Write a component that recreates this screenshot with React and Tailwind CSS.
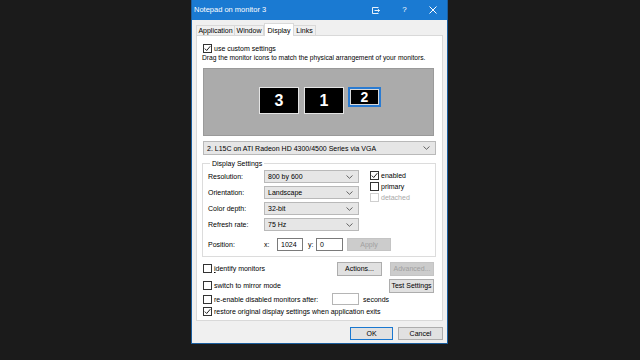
import React from 'react';

const font = { fontFamily: '"Liberation Sans", Arial, sans-serif' };

function Check({ checked, disabled }) {
  return (
    <div
      className={`w-[9px] h-[9px] border bg-white flex items-center justify-center shrink-0 ${
        disabled ? 'border-[#cfcfcf]' : 'border-[#333333]'
      }`}
    >
      {checked && (
        <svg width="7" height="7" viewBox="0 0 7 7">
          <path d="M0.8 3.6 L2.7 5.5 L6.3 1.2" fill="none" stroke="#222" strokeWidth="1" />
        </svg>
      )}
    </div>
  );
}

function CheckRow({ label, checked, disabled, className = '' }) {
  return (
    <div className={`flex items-center gap-[2px] whitespace-nowrap ${className}`}>
      <Check checked={checked} disabled={disabled} />
      <span className={disabled ? 'text-[#a8a8a8]' : 'text-black'}>{label}</span>
    </div>
  );
}

function Chevron() {
  return (
    <svg width="7" height="4" viewBox="0 0 7 4" className="shrink-0">
      <path d="M0.5 0.5 L3.5 3.3 L6.5 0.5" fill="none" stroke="#555" strokeWidth="0.9" />
    </svg>
  );
}

function Select({ value, className = '' }) {
  return (
    <div
      className={`h-[13px] bg-[#e6e6e6] border border-[#b9b9b9] flex items-center justify-between pl-[3px] pr-[5px] whitespace-nowrap ${className}`}
    >
      <span>{value}</span>
      <Chevron />
    </div>
  );
}

function Button({ label, disabled, primary, className = '' }) {
  return (
    <div
      className={`flex items-center justify-center border whitespace-nowrap ${
        disabled
          ? 'bg-[#cccccc] border-[#c4c4c4] text-[#a0a0a0]'
          : primary
          ? 'bg-[#e1e1e1] border-[#1a78d0] text-black'
          : 'bg-[#e1e1e1] border-[#adadad] text-black'
      } ${className}`}
    >
      {label}
    </div>
  );
}

function Monitor({ n, selected }) {
  if (selected) {
    return (
      <div className="w-[33px] h-[20px] border-2 border-[#2a7bd2] bg-black flex items-center justify-center">
        <div className="w-full h-full border border-[#d8d8d8] flex items-center justify-center text-white font-bold text-[14px]">
          {n}
        </div>
      </div>
    );
  }
  return (
    <div className="w-[40px] h-[27px] border border-[#e4e4e4] bg-black flex items-center justify-center text-white font-bold text-[16px]">
      {n}
    </div>
  );
}

export default function App() {
  const tabs = [
    { name: 'Application', w: 'w-[39px]' },
    { name: 'Window', w: 'w-[30px]' },
    { name: 'Display', w: 'w-[30px]', active: true },
    { name: 'Links', w: 'w-[23px]' },
  ];

  const rows = [
    ['Resolution:', '800 by 600'],
    ['Orientation:', 'Landscape'],
    ['Color depth:', '32-bit'],
    ['Refresh rate:', '75 Hz'],
  ];

  return (
    <div className="w-[640px] h-[360px] bg-[#1b1b1b] overflow-hidden" style={font}>
      <div className="ml-[191px] w-[257px] h-[344px] flex flex-col border-x border-b border-[#1b5e9e] text-[7px] leading-none">
        {/* title bar */}
        <div className="h-[20px] bg-[#1a7ad2] flex items-center text-white shrink-0">
          <span className="pl-[2px] text-[7.5px]">Notepad on monitor 3</span>
          <div className="ml-auto flex h-full">
            <div className="w-[29px] flex items-center justify-center">
              <svg width="8" height="7" viewBox="0 0 8 7">
                <path d="M6.5 0.5 H0.5 V6.5 H6.5" fill="none" stroke="#fff" strokeWidth="0.9" />
                <path d="M2.5 3.5 H7.5 M5.8 2 L7.5 3.5 L5.8 5" fill="none" stroke="#fff" strokeWidth="0.9" />
              </svg>
            </div>
            <div className="w-[29px] flex items-center justify-center text-[8px]">?</div>
            <div className="w-[28px] flex items-center justify-center">
              <svg width="8" height="8" viewBox="0 0 8 8">
                <path d="M0.5 0.5 L7.5 7.5 M7.5 0.5 L0.5 7.5" stroke="#fff" strokeWidth="1" />
              </svg>
            </div>
          </div>
        </div>

        {/* body */}
        <div className="flex-1 bg-[#f0f0f0] pl-[4px] pr-[4px] flex flex-col">
          {/* tabs */}
          <div className="h-[15px] flex items-end">
            {tabs.map((t) =>
              t.active ? (
                <div
                  key={t.name}
                  className={`${t.w} h-[13px] -mb-[1px] bg-white border border-b-0 border-[#d9d9d9] flex items-center justify-center relative z-10`}
                >
                  {t.name}
                </div>
              ) : (
                <div
                  key={t.name}
                  className={`${t.w} h-[10px] bg-[#f0f0f0] border border-b-0 border-[#d9d9d9] -ml-[1px] first:ml-0 flex items-center justify-center`}
                >
                  {t.name}
                </div>
              )
            )}
          </div>

          {/* panel */}
          <div className="h-[286px] bg-white border border-[#d9d9d9] flex flex-col pl-[6px] pr-[8px] pt-[7px]">
            <CheckRow label="use custom settings" checked className="h-[10px]" />
            <div className="h-[11px] flex items-center -ml-[1px] whitespace-nowrap text-[6.7px]">
              Drag the monitor icons to match the physical arrangement of your monitors.
            </div>

            <div className="mt-[4px] h-[68px] w-[231px] bg-[#ababab] border border-[#9a9a9a] flex items-start pt-[18px] pl-[55px]">
              <Monitor n="3" />
              <div className="w-[5px]" />
              <Monitor n="1" />
              <div className="w-[4px]" />
              <Monitor n="2" selected />
            </div>

            <Select
              value="2. L15C on ATI Radeon HD 4300/4500 Series via VGA"
              className="mt-[5px] h-[14px] w-[233px]"
            />

            <fieldset className="mt-[4px] w-[234px] -ml-[1px] h-[98px] border border-[#dcdcdc] pl-[5px] pr-[4px]">
              <legend className="px-[2px] ml-[2px] h-[9px] leading-[9px]">Display Settings</legend>
              <div className="flex mt-[2px]">
                <div className="flex flex-col gap-[3px]">
                  {rows.map(([label, value]) => (
                    <div key={label} className="flex items-center h-[13px]">
                      <span className="w-[56px]">{label}</span>
                      <Select value={value} className="w-[95px]" />
                    </div>
                  ))}
                </div>
                <div className="ml-[11px] flex flex-col">
                  <CheckRow label="enabled" checked className="h-[11px]" />
                  <CheckRow label="primary" className="h-[11px]" />
                  <CheckRow label="detached" disabled className="h-[11px]" />
                </div>
              </div>
              <div className="flex items-center h-[13px] mt-[7px]">
                <span className="w-[56px]">Position:</span>
                <span className="w-[13px]">x:</span>
                <div className="w-[26px] h-[13px] border border-[#7a7a7a] bg-white flex items-center pl-[3px]">1024</div>
                <span className="ml-[5px] w-[8px]">y:</span>
                <div className="w-[27px] h-[13px] border border-[#7a7a7a] bg-white flex items-center pl-[3px]">0</div>
                <Button label="Apply" disabled className="ml-[4px] w-[44px] h-[13px]" />
              </div>
            </fieldset>

            <div className="mt-[4px] h-[15px] flex items-center">
              <CheckRow
                label={
                  <span>
                    <span className="underline">i</span>dentify monitors
                  </span>
                }
              />
              <Button label="Actions..." className="ml-auto w-[45px] h-[14px]" />
              <Button label="Advanced..." disabled className="ml-[8px] w-[44px] h-[14px]" />
            </div>

            <div className="mt-[2px] h-[15px] flex items-center">
              <CheckRow label="switch to mirror mode" />
              <Button label="Test Settings" className="ml-auto w-[45px] h-[14px]" />
            </div>

            <div className="h-[12px] flex items-center">
              <CheckRow label="re-enable disabled monitors after:" className="w-[129px]" />
              <div className="w-[27px] h-[12px] border border-[#b5b5b5] bg-white" />
              <span className="ml-[4px]">seconds</span>
            </div>

            <div className="mt-[1px] h-[11px] flex items-center">
              <CheckRow label="restore original display settings when application exits" checked />
            </div>
          </div>

          {/* footer buttons */}
          <div className="mt-[6px] flex justify-end gap-[5px]">
            <Button label="OK" primary className="w-[43px] h-[13px]" />
            <Button label="Cancel" className="w-[45px] h-[13px]" />
          </div>
        </div>
      </div>
    </div>
  );
}
